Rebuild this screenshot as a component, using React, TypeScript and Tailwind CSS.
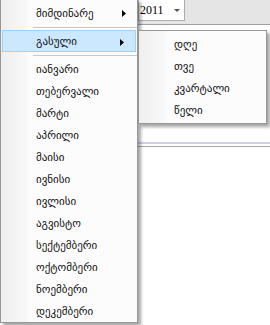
import React from 'react';

const font = { fontFamily: '"DejaVu Sans", "Noto Sans", sans-serif' };

function Arrow() {
  return (
    <svg width="4" height="7" viewBox="0 0 4 7" className="absolute right-[11px] top-[8px]">
      <path d="M0 0 L4 3.5 L0 7 Z" fill="#000" />
    </svg>
  );
}

function Item({ label, arrow, active }: { label: string; arrow?: boolean; active?: boolean }) {
  return (
    <div
      className={`relative h-[22px] flex items-center text-[11px] text-[#111] ${
        active ? 'bg-[#cce8ff] border border-[#99d1ff] mx-[1px] pl-[33px]' : 'pl-[35px]'
      }`}
    >
      <span className="leading-none">{label}</span>
      {arrow && <Arrow />}
    </div>
  );
}

function Sep() {
  return (
    <div className="h-[6px] flex items-center pl-[32px]">
      <div className="w-full h-px bg-[#c8c8c8]" />
    </div>
  );
}

export default function App() {
  const months = [
    'იანვარი',
    'თებერვალი',
    'მარტი',
    'აპრილი',
    'მაისი',
    'ივნისი',
    'ივლისი',
    'აგვისტო',
    'სექტემბერი',
    'ოქტომბერი',
    'ნოემბერი',
    'დეკემბერი',
  ];
  const periods = ['დღე', 'თვე', 'კვარტალი', 'წელი'];

  return (
    <div className="relative w-[270px] h-[325px] overflow-hidden bg-white" style={font}>
      {/* page behind the menus */}
      <div className="h-[26px] bg-[#e5e5e5] border-b border-[#a0a0a0] pl-[138px]">
        <div className="w-[47px] h-[22px] -mt-px bg-white border border-[#abadb3] flex items-center justify-between pl-[1px] pr-[4px]">
          <span className="text-[12px] text-black" style={{ fontFamily: '"Liberation Serif", serif' }}>2011</span>
          <svg width="6" height="3" viewBox="0 0 6 3">
            <path d="M0 0 L6 0 L3 3 Z" fill="#555" />
          </svg>
        </div>
      </div>
      <div className="h-[117px]" />
      <div className="h-[2px] bg-[#ccd4e4]" />
      <div className="h-[2px]" />
      <div className="h-px bg-[#a8a8a8]" />

      {/* main menu */}
      <div className="absolute left-0 top-[-1px] w-[138px] h-[324px] border border-[#979797] bg-[#fcfcfc] shadow-[3px_3px_3px_rgba(0,0,0,0.35)]">
        <div className="absolute left-0 top-0 bottom-0 w-[26px] bg-gradient-to-r from-[#efefef] to-[#f8f8f8]" />
        <div className="relative pt-[2px]">
          <Item label="მიმდინარე" arrow />
          <Sep />
          <Item label="გასული" arrow active />
          <Sep />
          {months.map(m => (
            <Item key={m} label={m} />
          ))}
        </div>
      </div>

      {/* submenu */}
      <div className="absolute left-[138px] top-[30px] w-[129px] h-[94px] border border-[#979797] bg-[#fcfcfc] shadow-[3px_3px_3px_rgba(0,0,0,0.35)]">
        <div className="absolute left-0 top-0 bottom-0 w-[26px] bg-gradient-to-r from-[#efefef] to-[#f8f8f8]" />
        <div className="relative pt-[2px]">
          {periods.map(p => (
            <Item key={p} label={p} />
          ))}
        </div>
      </div>
    </div>
  );
}
